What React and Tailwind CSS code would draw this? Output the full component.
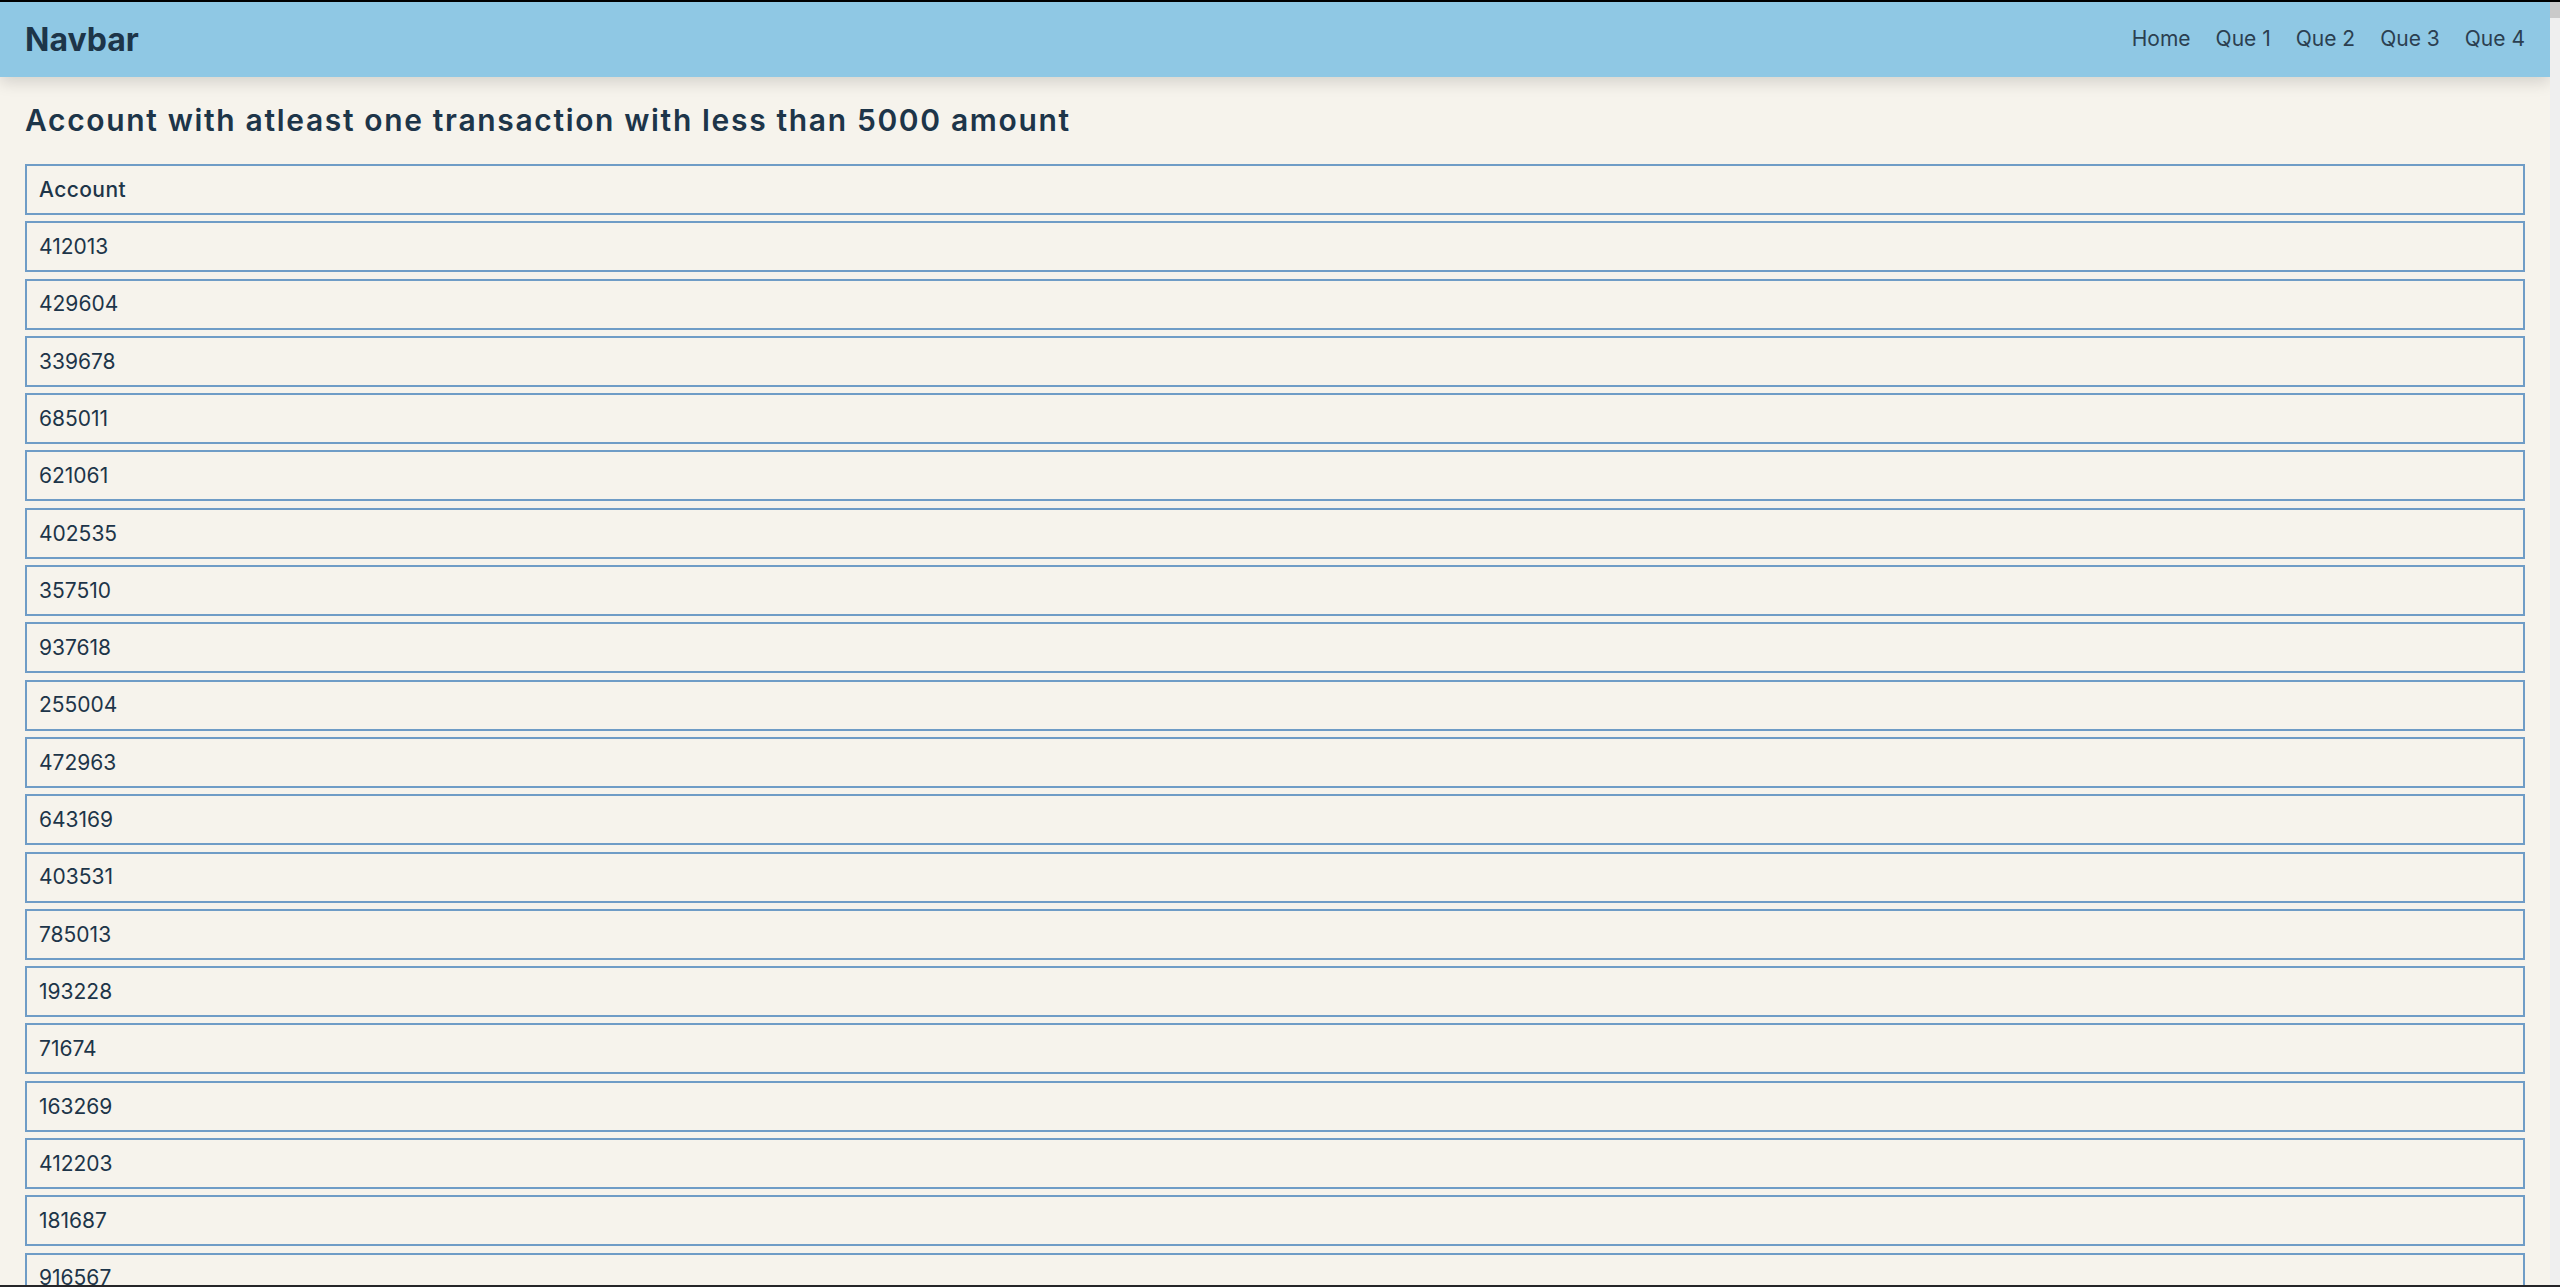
const accounts = [
  '412013',
  '429604',
  '339678',
  '685011',
  '621061',
  '402535',
  '357510',
  '937618',
  '255004',
  '472963',
  '643169',
  '403531',
  '785013',
  '193228',
  '71674',
  '163269',
  '412203',
  '181687',
  '916567',
  '508812',
  '330541',
];

const links = ['Home', 'Que 1', 'Que 2', 'Que 3', 'Que 4'];

export default function App() {
  return (
    <div className="flex h-[1287px] flex-col overflow-hidden bg-[#f6f3ec] font-['Inter',sans-serif] text-[#1d3549]">
      <div className="h-[2px] bg-black" />
      <div className="flex min-h-0 flex-1">
        <div className="min-w-0 flex-1 overflow-hidden">
          <nav className="relative z-10 flex h-[75px] items-center justify-between bg-[#8fc8e4] px-[25px] shadow-[0_6px_14px_rgba(0,0,0,0.13)]">
            <a href="#" className="text-[32px] font-bold leading-none">
              Navbar
            </a>
            <ul className="flex items-center gap-[25px]">
              {links.map((link) => (
                <li key={link}>
                  <a href="#" className="text-[21px] leading-none text-[#2b3f50]">
                    {link}
                  </a>
                </li>
              ))}
            </ul>
          </nav>

          <main className="px-[25px] pt-[28px]">
            <h1 className="text-[30px] font-semibold leading-none tracking-[0.055em]">
              Account with atleast one transaction with less than 5000 amount
            </h1>

            <div className="mt-[29px] flex flex-col gap-[6.3px]">
              <div className="flex h-[51px] items-center border-2 border-[#6f9cc6] px-[12px] text-[21px] font-medium tracking-[0.02em]">
                Account
              </div>
              {accounts.map((acc) => (
                <div
                  key={acc}
                  className="flex h-[51px] shrink-0 items-center border-2 border-[#6f9cc6] px-[12px] text-[21px]"
                >
                  {acc}
                </div>
              ))}
            </div>
          </main>
        </div>
        <div className="w-[10px] bg-[#efefef]">
          <div className="h-[16px] bg-[#cacaca]" />
        </div>
      </div>
      <div className="h-[2px] bg-[#252528]" />
    </div>
  );
}
